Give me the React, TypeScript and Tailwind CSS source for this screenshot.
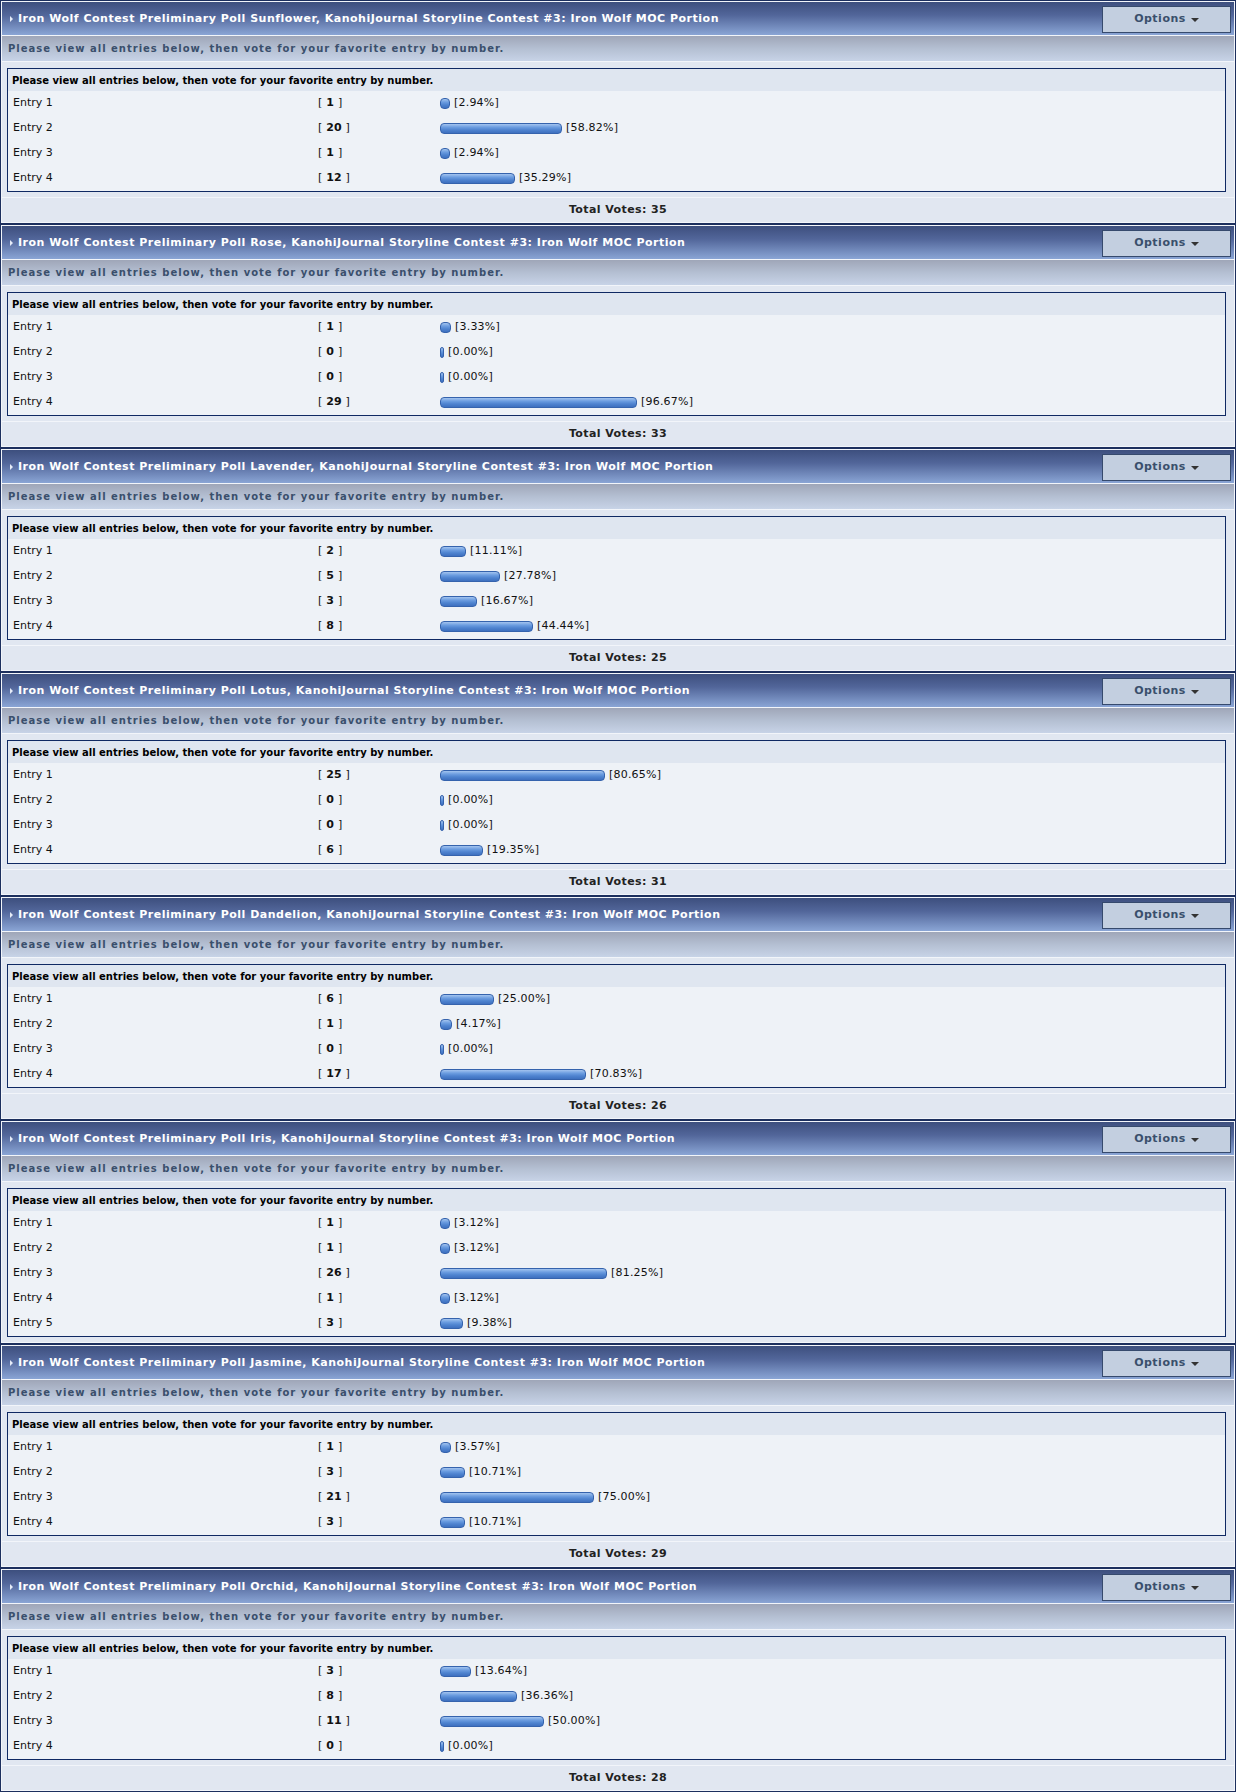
import React from 'react';

type Entry = { votes: number; pct: number };
type Poll = { name: string; entries: Entry[]; total?: number };

const polls: Poll[] = [
  { name: 'Sunflower', total: 35, entries: [{ votes: 1, pct: 2.94 }, { votes: 20, pct: 58.82 }, { votes: 1, pct: 2.94 }, { votes: 12, pct: 35.29 }] },
  { name: 'Rose', total: 33, entries: [{ votes: 1, pct: 3.33 }, { votes: 0, pct: 0 }, { votes: 0, pct: 0 }, { votes: 29, pct: 96.67 }] },
  { name: 'Lavender', total: 25, entries: [{ votes: 2, pct: 11.11 }, { votes: 5, pct: 27.78 }, { votes: 3, pct: 16.67 }, { votes: 8, pct: 44.44 }] },
  { name: 'Lotus', total: 31, entries: [{ votes: 25, pct: 80.65 }, { votes: 0, pct: 0 }, { votes: 0, pct: 0 }, { votes: 6, pct: 19.35 }] },
  { name: 'Dandelion', total: 26, entries: [{ votes: 6, pct: 25 }, { votes: 1, pct: 4.17 }, { votes: 0, pct: 0 }, { votes: 17, pct: 70.83 }] },
  { name: 'Iris', entries: [{ votes: 1, pct: 3.12 }, { votes: 1, pct: 3.12 }, { votes: 26, pct: 81.25 }, { votes: 1, pct: 3.12 }, { votes: 3, pct: 9.38 }] },
  { name: 'Jasmine', total: 29, entries: [{ votes: 1, pct: 3.57 }, { votes: 3, pct: 10.71 }, { votes: 21, pct: 75 }, { votes: 3, pct: 10.71 }] },
  { name: 'Orchid', total: 28, entries: [{ votes: 3, pct: 13.64 }, { votes: 8, pct: 36.36 }, { votes: 11, pct: 50 }, { votes: 0, pct: 0 }] },
];

const intro = 'Please view all entries below, then vote for your favorite entry by number.';

function Bar({ pct }: { pct: number }) {
  // bar image = left cap + 2px per percent + right cap
  const width = Math.round(pct * 2) + 4;
  return (
    <span
      className="inline-block h-[11px] rounded-[4px] border border-[#3563ad] bg-[linear-gradient(to_bottom,#a3c4ef_0%,#6c9de0_35%,#4f84d0_65%,#3e70bf_100%)]"
      style={{ width }}
    />
  );
}

function PollBlock({ poll }: { poll: Poll }) {
  return (
    <div className="h-[224px] border border-[#1c2f5e]">
      <div className="flex h-full flex-col gap-px bg-[#f2f5fa] p-px">
        <div className="flex h-[33px] shrink-0 items-center justify-between bg-[linear-gradient(to_bottom,#3d4f7e_0%,#52669a_40%,#8aa5d5_100%)] pl-[8px] pr-[3px]">
          <div className="flex items-center gap-[5px] pt-px text-[11px] font-bold tracking-[0.5px] text-white">
            <span className="h-0 w-0 border-y-[3px] border-l-[3px] border-y-transparent border-l-[#e6ecf7]" />
            <span>Iron Wolf Contest Preliminary Poll {poll.name}, KanohiJournal Storyline Contest #3: Iron Wolf MOC Portion</span>
          </div>
          <div className="mt-px flex h-[27px] w-[129px] items-center justify-center gap-[5px] border border-[#364a6d] bg-[#c3cfe0] text-[11px] font-bold tracking-[0.5px] text-[#3a4f6c]">
            <span>Options</span>
            <span className="mt-px h-0 w-0 border-x-[4px] border-t-[4px] border-x-transparent border-t-[#333]" />
          </div>
        </div>
        <div className="flex h-[25px] shrink-0 items-center bg-[linear-gradient(to_bottom,#9fa6b8_0%,#b4bfd2_50%,#c7d3e7_100%)] pl-[6px] text-[10px] font-bold tracking-[1px] text-[#3a4f6c]">
          {intro}
        </div>
        <div className="flex-1 bg-[#e1e7f1] pl-[5px] pr-[8px] pt-[6px]">
          <div className="border border-[#0f2963] bg-[#eef2f7] text-[11px] text-[#111]">
            <div className="flex h-[22px] items-center bg-[#dfe6f0] pl-[4px] text-[10px] font-bold text-black">{intro}</div>
            {poll.entries.map((e, i) => (
              <div key={i} className="grid h-[25px] grid-cols-[310px_122px_1fr] items-center">
                <div className="pl-[5px]">Entry {i + 1}</div>
                <div className="flex items-center gap-[4px]">
                  <span>[</span>
                  <span className="font-bold">{e.votes}</span>
                  <span>]</span>
                </div>
                <div className="flex items-center gap-[4px]">
                  <Bar pct={e.pct} />
                  <span className="tracking-[0.2px]">[{e.pct.toFixed(2)}%]</span>
                </div>
              </div>
            ))}
          </div>
        </div>
        {poll.total !== undefined && (
          <div className="flex h-[24px] shrink-0 items-center justify-center bg-[#e1e7f1] text-[11px] font-bold tracking-[0.4px] text-[#222]">
            Total Votes: {poll.total}
          </div>
        )}
      </div>
    </div>
  );
}

export default function App() {
  return (
    <div className="w-[1236px] bg-[#eef2f8] font-['DejaVu_Sans',Verdana,sans-serif]">
      {polls.map((p) => (
        <PollBlock key={p.name} poll={p} />
      ))}
    </div>
  );
}
